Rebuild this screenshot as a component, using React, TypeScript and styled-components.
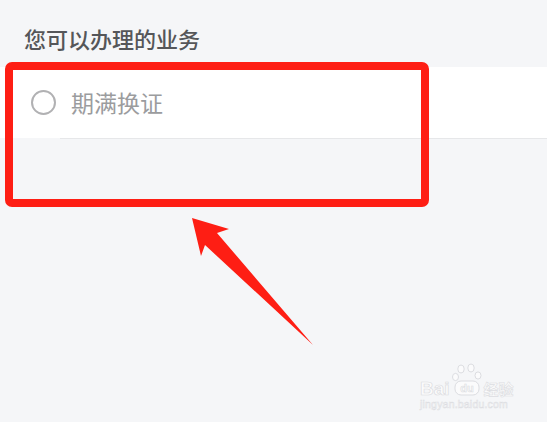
import React from 'react';
import styled, {createGlobalStyle} from 'styled-components';

const GlobalStyle = createGlobalStyle`
    html, body {
        margin: 0;
        padding: 0;
        background: #f5f6f8;
    }

    body {
        font-family: "Noto Sans CJK SC", "Noto Sans", sans-serif;
    }
`;

const services = ['期满换证'];

const App = () => (
    <Page>
        <GlobalStyle/>

        <Heading>您可以办理的业务</Heading>

        <List>
            {services.map(name => (
                <Row key={name}>
                    <Radio/>
                    <RowLabel>{name}</RowLabel>
                </Row>
            ))}
        </List>

        <Highlight/>

        <Arrow viewBox="0 0 547 422" width="547" height="422">
            <polygon
                points="192,218 229,229 217,233 313,345 205,245 201,256"
                fill="#fe1e14"
            />
        </Arrow>

        <Watermark>
            <LogoLine>
                <Brand>Bai</Brand>
                <Paw viewBox="0 0 30 34" width="30" height="34">
                    <g fill="#fbfbfc" stroke="#dcdde1" strokeWidth="1">
                        <ellipse cx="9" cy="6" rx="3.2" ry="4"/>
                        <ellipse cx="19" cy="5" rx="3.2" ry="4"/>
                        <ellipse cx="3.5" cy="14" rx="3" ry="3.6"/>
                        <ellipse cx="26" cy="12.5" rx="3" ry="3.6"/>
                        <rect x="3" y="18" width="24" height="14" rx="6"/>
                    </g>
                    <text x="15" y="29" textAnchor="middle" fontSize="11" fontWeight="700"
                        fontFamily="'Liberation Sans', sans-serif" fill="#fbfbfc" stroke="#dcdde1" strokeWidth="0.6">du</text>
                </Paw>
                <Jingyan>经验</Jingyan>
            </LogoLine>
            <Domain>jingyan.baidu.com</Domain>
        </Watermark>
    </Page>
);

export default App;

const Page = styled.div`
    position: relative;
    width: 547px;
    height: 422px;
    overflow: hidden;
    background: #f5f6f8;
    padding-top: 27px;
    box-sizing: border-box;
`;

const Heading = styled.h2`
    margin: 0 0 18px;
    padding-left: 24px;
    font-size: 22px;
    line-height: 22px;
    font-weight: 500;
    color: #555659;
`;

const List = styled.div`
    background: #ffffff;
`;

const Row = styled.div`
    display: flex;
    align-items: center;
    gap: 15px;
    height: 71px;
    padding-left: 31px;
    position: relative;

    &::after {
        content: '';
        position: absolute;
        left: 60px;
        right: 0;
        bottom: -1px;
        height: 1px;
        background: #e6e7e9;
    }
`;

const Radio = styled.span`
    width: 21px;
    height: 21px;
    border: 2px solid #b1b1b3;
    border-radius: 50%;
    flex-shrink: 0;
`;

const RowLabel = styled.span`
    font-size: 23px;
    line-height: 23px;
    color: #9b9c9e;
`;

const Highlight = styled.div`
    position: absolute;
    left: 5px;
    top: 62px;
    width: 424px;
    height: 145px;
    box-sizing: border-box;
    border: 8px solid #fe1e14;
    border-radius: 7px;
`;

const Arrow = styled.svg`
    position: absolute;
    left: 0;
    top: 0;
    pointer-events: none;
`;

const Watermark = styled.div`
    position: absolute;
    left: 420px;
    top: 363px;
    display: flex;
    flex-direction: column;
    align-items: flex-start;
`;

const LogoLine = styled.div`
    display: flex;
    align-items: flex-end;
    gap: 2px;
`;

const Brand = styled.span`
    font-family: "Liberation Sans", Arial, sans-serif;
    font-size: 19px;
    line-height: 17px;
    font-weight: 700;
    color: #fbfbfc;
    -webkit-text-stroke: 0.7px #dcdde1;
`;

const Paw = styled.svg`
    display: block;
`;

const Jingyan = styled.span`
    font-size: 15px;
    line-height: 16px;
    font-weight: 700;
    color: #fbfbfc;
    -webkit-text-stroke: 0.6px #dcdde1;
`;

const Domain = styled.span`
    margin-top: 2px;
    font-family: "Liberation Sans", Arial, sans-serif;
    font-size: 10.5px;
    line-height: 11px;
    letter-spacing: 0.2px;
    color: #fbfbfc;
    -webkit-text-stroke: 0.5px #dcdde1;
`;
